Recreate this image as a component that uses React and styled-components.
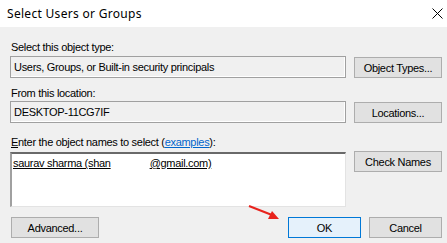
import React from "react";
import styled, { createGlobalStyle } from "styled-components";

const GlobalStyle = createGlobalStyle`
  html, body {
    margin: 0;
    padding: 0;
    background: #f0f0f0;
  }
  * {
    box-sizing: border-box;
  }
`;

const Dialog = styled.div`
  position: relative;
  width: 447px;
  height: 243px;
  background: #f0f0f0;
  font-family: "Liberation Sans", Arial, sans-serif;
  font-size: 11px;
  letter-spacing: -0.3px;
  color: #000;
  overflow: hidden;
`;

const TitleBar = styled.div`
  height: 27px;
  background: #fff;
  display: flex;
  align-items: center;
  justify-content: space-between;
  padding: 0 3px 0 7px;
`;

const Title = styled.span`
  font-family: "Noto Sans", "Open Sans", sans-serif;
  font-size: 12px;
  letter-spacing: 0.3px;
  color: #000;
`;

const CloseBox = styled.div`
  width: 14px;
  height: 14px;
  display: flex;
  align-items: center;
  justify-content: center;
  margin-bottom: 1px;
`;

const Body = styled.div`
  display: flex;
  flex-direction: column;
  padding: 13px 5px 0 10px;
`;

const Label = styled.div`
  height: 14px;
  line-height: 14px;
  padding-left: 1px;
  margin-top: ${(p) => p.$top || 0}px;
  margin-bottom: ${(p) => p.$bottom || 0}px;
`;

const Row = styled.div`
  display: flex;
  align-items: flex-start;
  gap: 8px;
`;

const Field = styled.div`
  flex: 1;
  height: 22px;
  line-height: 20px;
  padding-left: 3px;
  border: 1px solid #a0a0a0;
  box-shadow: inset -1px -1px 0 #ffffff;
  background: #f0f0f0;
  white-space: nowrap;
`;

const NamesBox = styled.div`
  flex: 1;
  height: 55px;
  background: #fff;
  border-style: solid;
  border-width: 2px 1px 1px 2px;
  border-color: #696969 #e3e3e3 #e3e3e3 #a0a0a0;
  padding: 3px 0 0 1px;
  line-height: 13px;
`;

const Name = styled.span`
  text-decoration: underline;
  margin-right: ${(p) => p.$gap || 0}px;
`;

const Button = styled.button`
  width: ${(p) => p.$w || 88}px;
  height: 21px;
  margin-top: ${(p) => p.$top || 0}px;
  padding: 0;
  font-family: "Liberation Sans", Arial, sans-serif;
  font-size: 11px;
  letter-spacing: -0.3px;
  color: #000;
  background: ${(p) => (p.$default ? "#e5f1fb" : "#e1e1e1")};
  border: 1px solid ${(p) => (p.$default ? "#0078d7" : "#adadad")};
  border-radius: 0;
  flex-shrink: 0;
`;

const Footer = styled.div`
  display: flex;
  align-items: center;
  margin-top: 10px;
  padding-left: 1px;
  gap: 8px;
`;

const Spacer = styled.div`
  flex: 1;
`;

const Accel = styled.span`
  text-decoration: underline;
`;

const Link = styled.span`
  color: #0066cc;
  text-decoration: underline;
`;

const Arrow = styled.svg`
  position: absolute;
  left: 246px;
  top: 203px;
`;

export default function App() {
  return (
    <>
      <GlobalStyle />
      <Dialog>
        <TitleBar>
          <Title>Select Users or Groups</Title>
          <CloseBox>
            <svg width="11" height="11" viewBox="0 0 11 11">
              <path d="M0.5 0.5 L10.5 10.5 M10.5 0.5 L0.5 10.5" stroke="#000" strokeWidth="1" />
            </svg>
          </CloseBox>
        </TitleBar>
        <Body>
          <Label $bottom={2}>Select this object type:</Label>
          <Row>
            <Field>Users, Groups, or Built-in security principals</Field>
            <Button $top={1}>Object Types...</Button>
          </Row>
          <Label $top={8} $bottom={1}>From this location:</Label>
          <Row>
            <Field>DESKTOP-11CG7IF</Field>
            <Button $top={1}>Locations...</Button>
          </Row>
          <Label $top={12} $bottom={3}>
            <Accel>E</Accel>nter the object names to select (<Link>examples</Link>):
          </Label>
          <Row>
            <NamesBox>
              <Name $gap={39}>saurav sharma (shan</Name>
              <Name>@gmail.com)</Name>
            </NamesBox>
            <Button $top={-1}>Check Names</Button>
          </Row>
          <Footer>
            <Button>Advanced...</Button>
            <Spacer />
            <Button $w={73} $default>OK</Button>
            <Button $w={73}>Cancel</Button>
          </Footer>
        </Body>
        <Arrow width="36" height="20" viewBox="0 0 36 20">
          <line x1="3" y1="3" x2="26" y2="12" stroke="#e8231d" strokeWidth="2" />
          <polygon points="33,16 22,16 26,8" fill="#e8231d" />
        </Arrow>
      </Dialog>
    </>
  );
}
